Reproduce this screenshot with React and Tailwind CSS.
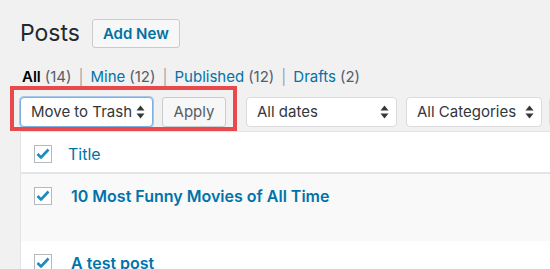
import React from 'react';

function Arrows() {
  return (
    <svg width="9" height="14" viewBox="0 0 9 14" className="shrink-0">
      <path d="M4.5 0.5 L8.5 5.5 H0.5 Z" fill="#32373c" />
      <path d="M4.5 13.5 L8.5 8.5 H0.5 Z" fill="#32373c" />
    </svg>
  );
}

function Select({ label, className = '', focused = false }) {
  return (
    <div
      className={`shrink-0 h-[30px] flex items-center justify-between pl-[10px] pr-[7px] rounded-[4px] bg-white border text-[15px] text-[#32373c] ${
        focused ? 'border-[#7eb0e0] shadow-[0_0_0_1px_#a5c7ea]' : 'border-[#dcdcde]'
      } ${className}`}
    >
      <span className="whitespace-nowrap">{label}</span>
      <Arrows />
    </div>
  );
}

function Checkbox() {
  return (
    <div className="w-[18px] h-[18px] border border-[#b4b9be] bg-white flex items-center justify-center shrink-0">
      <svg width="14" height="12" viewBox="0 0 14 12">
        <path d="M1.5 6 L5 9.5 L12.5 1.5" fill="none" stroke="#1e8cbe" strokeWidth="2.6" strokeLinejoin="round" />
      </svg>
    </div>
  );
}

export default function App() {
  return (
    <div
      className="h-[269px] w-[550px] overflow-hidden bg-[#f1f1f1] pl-[20px]"
      style={{ fontFamily: 'Inter, "Liberation Sans", sans-serif' }}
    >
      <div className="flex items-center pt-[19px] h-[29px] box-content">
        <h1 className="text-[23px] font-normal text-[#23282d] leading-none">Posts</h1>
        <button className="ml-[12px] h-[29px] px-[10px] border border-[#c9cccf] rounded-[3px] bg-[#f7f7f7] text-[#0071a1] text-[15px] font-semibold leading-none">
          Add New
        </button>
      </div>

      <div className="mt-[22px] ml-[2px] flex items-center text-[15px] text-[#555d66] leading-[14px]">
        <span className="font-semibold text-[#000]">All</span>
        <span className="ml-[4px]">(14)</span>
        <span className="mx-[7px] text-[#a0a5aa]">|</span>
        <span className="text-[#0073aa]">Mine</span>
        <span className="ml-[4px]">(12)</span>
        <span className="mx-[7px] text-[#a0a5aa]">|</span>
        <span className="text-[#0073aa]">Published</span>
        <span className="ml-[4px]">(12)</span>
        <span className="mx-[7px] text-[#a0a5aa]">|</span>
        <span className="text-[#0073aa]">Drafts</span>
        <span className="ml-[4px]">(2)</span>
      </div>

      <div className="mt-[13px] flex items-start">
        <div className="relative flex gap-[9px] shrink-0">
          <Select label="Move to Trash" focused className="w-[133px]" />
          <button className="shrink-0 h-[30px] w-[64px] border border-[#c9cccf] rounded-[3px] bg-[#f7f7f7] text-[15px] text-[#555d66]">
            Apply
          </button>
          <div className="absolute -left-[10px] -top-[11px] -right-[11px] -bottom-[4px] border-4 border-[#e8494b] pointer-events-none" />
        </div>
        <Select label="All dates" className="ml-[20px] w-[151px]" />
        <Select label="All Categories" className="ml-[9px] w-[136px]" />
        <Select label="" className="ml-[7px] w-[40px]" />
      </div>

      <div className="mt-[4px] border-l border-t border-[#e2e4e7] bg-white">
        <div className="h-[42px] flex items-center pl-[13px] pt-[3px] border-b-2 border-[#e2e4e7]">
          <Checkbox />
          <span className="ml-[16px] text-[16px] text-[#0073aa]">Title</span>
        </div>
        <div className="h-[67px] flex items-start pt-[13px] pl-[13px] bg-[#f9f9f9]">
          <Checkbox />
          <span className="ml-[19px] text-[16px] font-semibold text-[#0073aa] leading-[18px]">
            10 Most Funny Movies of All Time
          </span>
        </div>
        <div className="h-[40px] flex items-start pt-[13px] pl-[13px] bg-white">
          <Checkbox />
          <span className="ml-[19px] text-[16px] font-semibold text-[#0073aa] leading-[18px]">
            A test post
          </span>
        </div>
      </div>
    </div>
  );
}
